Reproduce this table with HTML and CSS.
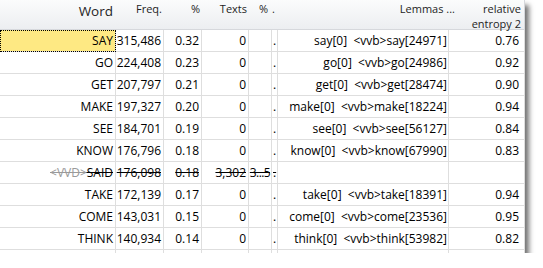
FILE: index.html
```html
<!DOCTYPE html>
<html>
<head>
<meta charset="utf-8">
<link rel="stylesheet" href="styles.css">
</head>
<body>
<div class="sheet">
  <div class="head">
    <div class="h h-word">Word</div>
    <div class="h">Freq.</div>
    <div class="h">%</div>
    <div class="h">Texts</div>
    <div class="h h-pc">%</div>
    <div class="h h-dot">.</div>
    <div class="h">Lemmas ...</div>
    <div class="h h-ent">relative<br>entropy 2</div>
  </div>
  <div class="row">
    <div class="c c-word focus">SAY</div><div class="c">315,486</div><div class="c">0.32</div><div class="c">0</div><div class="c"></div><div class="c c-dot">.</div><div class="c c-lem">say[0]  &lt;vvb&gt;say[24971]</div><div class="c c-ent">0.76</div>
  </div>
  <div class="row">
    <div class="c c-word">GO</div><div class="c">224,408</div><div class="c">0.23</div><div class="c">0</div><div class="c"></div><div class="c c-dot">.</div><div class="c c-lem">go[0]  &lt;vvb&gt;go[24986]</div><div class="c c-ent">0.92</div>
  </div>
  <div class="row">
    <div class="c c-word">GET</div><div class="c">207,797</div><div class="c">0.21</div><div class="c">0</div><div class="c"></div><div class="c c-dot">.</div><div class="c c-lem">get[0]  &lt;vvb&gt;get[28474]</div><div class="c c-ent">0.90</div>
  </div>
  <div class="row">
    <div class="c c-word">MAKE</div><div class="c">197,327</div><div class="c">0.20</div><div class="c">0</div><div class="c"></div><div class="c c-dot">.</div><div class="c c-lem">make[0]  &lt;vvb&gt;make[18224]</div><div class="c c-ent">0.94</div>
  </div>
  <div class="row">
    <div class="c c-word">SEE</div><div class="c">184,701</div><div class="c">0.19</div><div class="c">0</div><div class="c"></div><div class="c c-dot">.</div><div class="c c-lem">see[0]  &lt;vvb&gt;see[56127]</div><div class="c c-ent">0.84</div>
  </div>
  <div class="row">
    <div class="c c-word">KNOW</div><div class="c">176,796</div><div class="c">0.18</div><div class="c">0</div><div class="c"></div><div class="c c-dot">.</div><div class="c c-lem">know[0]  &lt;vvb&gt;know[67990]</div><div class="c c-ent">0.83</div>
  </div>
  <div class="row struck">
    <div class="c c-word"><span class="tag">&lt;VVD&gt;</span>SAID</div><div class="c">176,098</div><div class="c">0.18</div><div class="c">3,302</div><div class="c c-pc">3...5</div><div class="c c-dot">.</div><div class="c c-lem"></div><div class="c c-ent"></div>
  </div>
  <div class="row">
    <div class="c c-word">TAKE</div><div class="c">172,139</div><div class="c">0.17</div><div class="c">0</div><div class="c"></div><div class="c c-dot">.</div><div class="c c-lem">take[0]  &lt;vvb&gt;take[18391]</div><div class="c c-ent">0.94</div>
  </div>
  <div class="row">
    <div class="c c-word">COME</div><div class="c">143,031</div><div class="c">0.15</div><div class="c">0</div><div class="c"></div><div class="c c-dot">.</div><div class="c c-lem">come[0]  &lt;vvb&gt;come[23536]</div><div class="c c-ent">0.95</div>
  </div>
  <div class="row">
    <div class="c c-word">THINK</div><div class="c">140,934</div><div class="c">0.14</div><div class="c">0</div><div class="c"></div><div class="c c-dot">.</div><div class="c c-lem">think[0]  &lt;vvb&gt;think[53982]</div><div class="c c-ent">0.82</div>
  </div>
  <div class="row">
    <div class="c"></div><div class="c"></div><div class="c"></div><div class="c"></div><div class="c"></div><div class="c"></div><div class="c"></div><div class="c"></div>
  </div>
</div>
</body>
</html>
```

FILE: styles.css
```css
html, body {
  margin: 0;
  padding: 0;
  background: #ffffff;
}

.sheet {
  width: 525px;
  height: 253px;
  overflow: hidden;
  background: #ffffff;
  box-shadow: 4px 5px 5px rgba(0, 0, 0, 0.55);
  font-family: "Open Sans", "Noto Sans", sans-serif;
  color: #000;
}

.head {
  display: grid;
  grid-template-columns: 116px 48px 38px 47px 23px 6px 179px 68px;
  height: 30px;
  box-sizing: border-box;
  background: linear-gradient(#fbfcfc, #eceef1);
  border-bottom: 1px solid #d6d8dc;
  border-right: 1px solid #d6d8dc;
}

.h {
  font-size: 11px;
  line-height: 15px;
  padding: 1px 2px 0 0;
  text-align: right;
  color: #1e1e1e;
  white-space: nowrap;
}

.h-word {
  font-size: 13.5px;
  line-height: 22px;
  padding-top: 0;
  padding-right: 3px;
}

.h-pc {
  padding-right: 4px;
}

.h-dot {
  text-align: left;
  padding-left: 0;
  padding-right: 0;
}

.h-ent {
  padding-right: 4px;
}

.row {
  display: grid;
  grid-template-columns: 116px 48px 38px 47px 23px 6px 171px 76px;
  height: 22px;
}

.c {
  box-sizing: border-box;
  height: 22px;
  border-right: 1px solid #dedede;
  border-bottom: 1px solid #dedede;
  font-size: 12px;
  line-height: 21px;
  text-align: right;
  padding-right: 2px;
  white-space: pre;
  overflow: hidden;
}

.c-word {
  padding-right: 2px;
}

.focus {
  background: #fee983;
  outline: 1px dotted #000;
  outline-offset: -1px;
}

.c-dot {
  text-align: left;
  padding: 0 0 0 1px;
}

.c-pc {
  padding-right: 1px;
  letter-spacing: -0.6px;
  overflow: visible;
}

.c-lem {
  padding-right: 1px;
}

.c-ent {
  padding-right: 5px;
}

.struck .c {
  text-decoration: line-through;
}

.tag {
  color: #9a9a9a;
  text-decoration: line-through;
}
```
